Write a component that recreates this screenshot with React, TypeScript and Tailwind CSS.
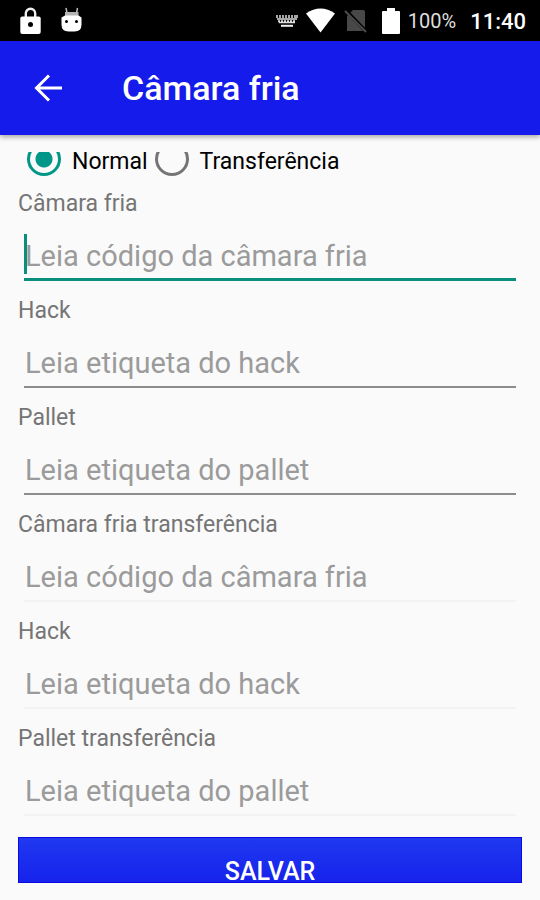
import React, { useState } from "react";

type Field = {
  id: string;
  label: string;
  hint: string;
  disabled?: boolean;
  focused?: boolean;
};

const fields: Field[] = [
  { id: "camara", label: "Câmara fria", hint: "Leia código da câmara fria", focused: true },
  { id: "hack", label: "Hack", hint: "Leia etiqueta do hack" },
  { id: "pallet", label: "Pallet", hint: "Leia etiqueta do pallet" },
  { id: "camara-transf", label: "Câmara fria transferência", hint: "Leia código da câmara fria", disabled: true },
  { id: "hack-transf", label: "Hack", hint: "Leia etiqueta do hack", disabled: true },
  { id: "pallet-transf", label: "Pallet transferência", hint: "Leia etiqueta do pallet", disabled: true },
];

function StatusBar() {
  return (
    <div className="flex h-[41px] items-center justify-between bg-black pr-[14px] pl-5 text-white">
      <div className="flex items-center gap-5">
        <svg width="21" height="28" viewBox="0 0 21 28" aria-hidden="true">
          <path d="M5.800 11V6.500a4.700 4.700 0 0 1 9.400 0V11" fill="none" stroke="#eee" strokeWidth="2.400" />
          <rect x="0.3" y="9.500" width="20.400" height="17.500" rx="2" fill="#fff" />
          <circle cx="10.500" cy="17.600" r="2.500" fill="#000" />
        </svg>
        <svg width="21" height="28" viewBox="0 0 21 28" aria-hidden="true">
          <path d="M5 1l1 5M16.500 1l-1 5" stroke="#bbb" strokeWidth="1.500" />
          <path d="M4 5h13.500v5H4z" fill="#b4b4b4" />
          <path d="M.5 10.500 4 8.500h13.500l3 2v7q0 7-7 7h-6q-7 0-7-7z" fill="#fff" />
          <circle cx="5.500" cy="14.500" r="1.500" fill="#000" />
          <circle cx="15.500" cy="14.500" r="1.500" fill="#000" />
        </svg>
      </div>
      <div className="flex items-center">
        <svg width="22" height="14" viewBox="0 0 22 14" aria-hidden="true">
          <path d="M1 1v3M4 1v3M7 1v3M10 1v3M13 1v3M16 1v3M19 1v3M21 1v3M1 5h20M3 8.500h16" stroke="#ddd" strokeWidth="1.500" />
          <path d="M2 7.300h18" stroke="#ddd" strokeWidth="2" strokeDasharray="2 1" />
          <path d="M5 11.800h12" stroke="#eee" strokeWidth="2" />
        </svg>
        <svg className="ml-2" width="29" height="25" viewBox="0 0 29 25" aria-hidden="true">
          <path d="M0 5.500Q14.500-4.500 29 5.500L14.500 24.500z" fill="#fff" />
        </svg>
        <svg className="ml-[9px]" width="24" height="25" viewBox="0 0 24 25" aria-hidden="true">
          <path d="M9 2h10q2 0 2 2v19H3V8z" fill="#484848" />
          <path d="M1 1.500 23 24.500" stroke="#000" strokeWidth="3.500" />
          <path d="M1 3 22 24" stroke="#4d4d4d" strokeWidth="2" />
        </svg>
        <svg className="ml-[14px]" width="18" height="26" viewBox="0 0 18 26" aria-hidden="true">
          <path d="M5 0h8v3h4q1 0 1 1v21q0 1-1 1H1q-1 0-1-1V4q0-1 1-1h4z" fill="#fff" />
        </svg>
        <span className="ml-2 text-[20px] leading-7 text-[#dedede]">100%</span>
        <span className="ml-[14px] pt-[2px] text-[22px] leading-7 font-medium">11:40</span>
      </div>
    </div>
  );
}

function Choice({ label, checked, onChange }: { label: string; checked: boolean; onChange: () => void }) {
  return (
    <label className="flex gap-[11px] text-[23px] text-black">
      <input
        type="radio"
        name="modo"
        checked={checked}
        onChange={onChange}
        className="size-[34px] shrink-0 appearance-none rounded-full border-[3px] border-[#757575] checked:border-[#009688] checked:bg-[radial-gradient(circle,#009688_0_8px,transparent_9px)]"
      />
      <span className="pt-[6px] leading-7">{label}</span>
    </label>
  );
}

function TextField({ field }: { field: Field }) {
  const line = field.focused
    ? "border-b-[3px] border-[#0a8f7c] pt-1"
    : field.disabled
      ? "border-b-2 border-[#f3f3f3] pt-[2px]"
      : "border-b-2 border-[#8c8c8c] pt-[2px]";
  return (
    <div className="h-[107px]">
      <label htmlFor={field.id} className="block text-[23px] leading-7 text-[#757575]">
        {field.label}
      </label>
      <div className="relative mx-[6px] mt-3">
        {field.focused && <span className="absolute top-1 left-0 h-10 w-[3px] bg-[#0a8f7c]" />}
        <input
          id={field.id}
          type="text"
          placeholder={field.hint}
          disabled={field.disabled}
          className={`block h-[51px] w-full bg-transparent pl-px text-[29px] text-[#212121] caret-transparent outline-none placeholder:text-[#9b9b9b] ${line}`}
        />
      </div>
    </div>
  );
}

export default function App() {
  const [mode, setMode] = useState("normal");
  return (
    <div className="min-h-screen bg-[#fafafa] font-[Roboto,sans-serif]">
      <StatusBar />
      <header className="flex h-[94px] items-center bg-[#151bea] px-[34px] text-white shadow-[0_2px_5px_rgba(0,0,0,0.35)]">
        <button type="button" aria-label="Voltar" className="block">
          <svg width="28" height="28" viewBox="0 0 28 28" fill="none" stroke="#fff" strokeWidth="3" aria-hidden="true">
            <path d="M15 1.500 2.500 14 15 26.500M2.500 14H28" />
          </svg>
        </button>
        <h1 className="ml-[60px] text-[34px] leading-10 font-medium">Câmara fria</h1>
      </header>
      <main className="mt-[17px] overflow-hidden px-[18px]">
        <div className="-mt-[10px] mb-[14px] flex gap-[7px] pl-[9px]">
          <Choice label="Normal" checked={mode === "normal"} onChange={() => setMode("normal")} />
          <Choice label="Transferência" checked={mode === "transferencia"} onChange={() => setMode("transferencia")} />
        </div>
        {fields.map((field) => (
          <TextField key={field.id} field={field} />
        ))}
        <button
          type="button"
          className="mt-[5px] block h-[46px] w-full overflow-hidden border border-[#0a0ae0] bg-linear-to-b from-[#1f38f0] to-[#1722ec] pt-[22px] text-[25px] leading-6 font-medium text-white"
        >
          SALVAR
        </button>
      </main>
    </div>
  );
}
